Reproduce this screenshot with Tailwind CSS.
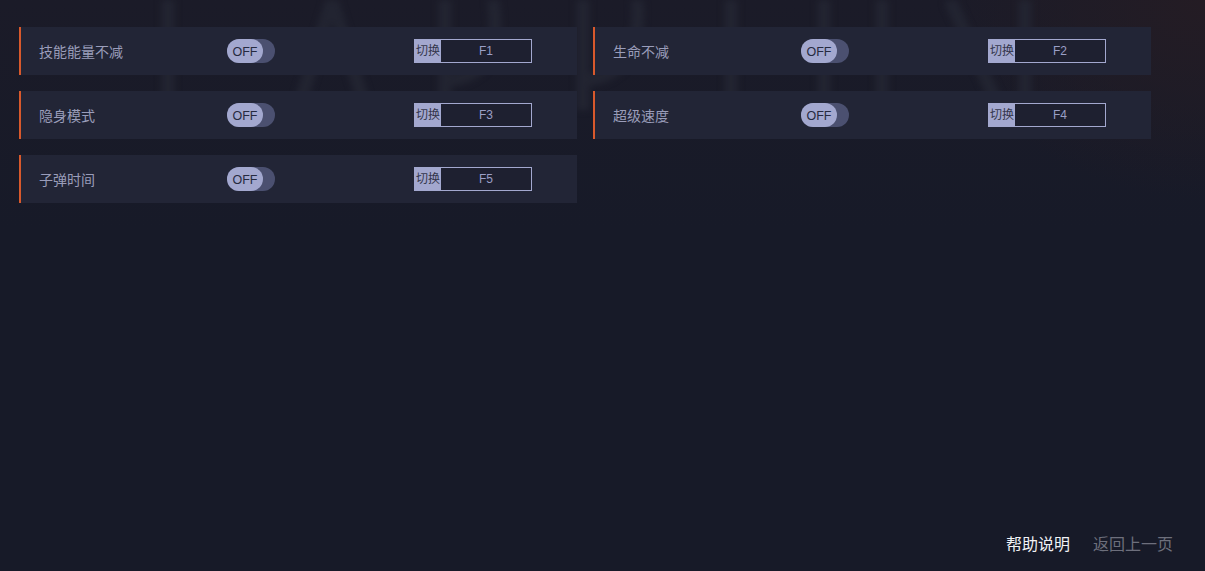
<!DOCTYPE html>
<html lang="zh-CN">
<head>
  <meta charset="UTF-8" />
  <title>修改器</title>
  <script src="https://cdn.jsdelivr.net/npm/@tailwindcss/browser@4"></script>
</head>
<body class="bg-[#171a28] font-['Liberation_Sans','Noto_Sans_CJK_SC',sans-serif]">
  <div class="relative w-[1205px] h-[571px] overflow-hidden">
    <!-- blurred backdrop picture -->
    <div class="absolute inset-x-0 top-0 h-[230px] bg-gradient-to-b from-[#1b1b28] to-[#171a28]"></div>
    <div class="absolute right-0 top-0 w-[260px] h-[200px] bg-[radial-gradient(ellipse_at_top_right,#241c24,transparent_70%)]"></div>
    <svg class="absolute left-0 top-0 blur-[3px]" width="1205" height="110" viewBox="0 0 1205 110" fill="none" stroke="#222431" stroke-width="13">
      <path d="M168 0V110" />
      <path d="M332 0L298 110M332 0L366 110" />
      <path d="M445 0V110M445 80C490 80 500 40 493 0" />
      <path d="M583 0V110M583 80C625 80 642 40 637 0" />
      <path d="M731 0V110" />
      <path d="M824 0V110" />
      <path d="M882 0V110" />
      <path d="M950 0L1000 110" />
      <path d="M1025 0V110" />
    </svg>

    <div class="relative grid grid-cols-[558px_558px] gap-4 pl-[19px] pt-[27px]">
      <div class="flex items-center h-12 bg-[#222536] border-l-2 border-[#d8592c] pl-[18px]">
        <span class="w-[188px] pt-0.5 text-sm text-[#9a9dba]">技能能量不减</span>
        <div class="w-12 h-6 rounded-full bg-[#4b5070]"><div class="flex items-center justify-center w-9 h-6 pt-0.5 rounded-full bg-[#a3a8cf] text-[12.5px] text-[#262a40]">OFF</div></div>
        <div class="flex ml-[139px] w-[118px] h-6 border border-[#a3a8cf] text-xs"><span class="flex items-center justify-center w-[26px] bg-[#a3a8cf] text-[#33364c]">切换</span><span class="flex-1 flex items-center justify-center text-[#9a9fc6] bg-[#1e2030]">F1</span></div>
      </div>
      <div class="flex items-center h-12 bg-[#222536] border-l-2 border-[#d8592c] pl-[18px]">
        <span class="w-[188px] pt-0.5 text-sm text-[#9a9dba]">生命不减</span>
        <div class="w-12 h-6 rounded-full bg-[#4b5070]"><div class="flex items-center justify-center w-9 h-6 pt-0.5 rounded-full bg-[#a3a8cf] text-[12.5px] text-[#262a40]">OFF</div></div>
        <div class="flex ml-[139px] w-[118px] h-6 border border-[#a3a8cf] text-xs"><span class="flex items-center justify-center w-[26px] bg-[#a3a8cf] text-[#33364c]">切换</span><span class="flex-1 flex items-center justify-center text-[#9a9fc6] bg-[#1e2030]">F2</span></div>
      </div>
      <div class="flex items-center h-12 bg-[#222536] border-l-2 border-[#d8592c] pl-[18px]">
        <span class="w-[188px] pt-0.5 text-sm text-[#9a9dba]">隐身模式</span>
        <div class="w-12 h-6 rounded-full bg-[#4b5070]"><div class="flex items-center justify-center w-9 h-6 pt-0.5 rounded-full bg-[#a3a8cf] text-[12.5px] text-[#262a40]">OFF</div></div>
        <div class="flex ml-[139px] w-[118px] h-6 border border-[#a3a8cf] text-xs"><span class="flex items-center justify-center w-[26px] bg-[#a3a8cf] text-[#33364c]">切换</span><span class="flex-1 flex items-center justify-center text-[#9a9fc6] bg-[#1e2030]">F3</span></div>
      </div>
      <div class="flex items-center h-12 bg-[#222536] border-l-2 border-[#d8592c] pl-[18px]">
        <span class="w-[188px] pt-0.5 text-sm text-[#9a9dba]">超级速度</span>
        <div class="w-12 h-6 rounded-full bg-[#4b5070]"><div class="flex items-center justify-center w-9 h-6 pt-0.5 rounded-full bg-[#a3a8cf] text-[12.5px] text-[#262a40]">OFF</div></div>
        <div class="flex ml-[139px] w-[118px] h-6 border border-[#a3a8cf] text-xs"><span class="flex items-center justify-center w-[26px] bg-[#a3a8cf] text-[#33364c]">切换</span><span class="flex-1 flex items-center justify-center text-[#9a9fc6] bg-[#1e2030]">F4</span></div>
      </div>
      <div class="flex items-center h-12 bg-[#222536] border-l-2 border-[#d8592c] pl-[18px]">
        <span class="w-[188px] pt-0.5 text-sm text-[#9a9dba]">子弹时间</span>
        <div class="w-12 h-6 rounded-full bg-[#4b5070]"><div class="flex items-center justify-center w-9 h-6 pt-0.5 rounded-full bg-[#a3a8cf] text-[12.5px] text-[#262a40]">OFF</div></div>
        <div class="flex ml-[139px] w-[118px] h-6 border border-[#a3a8cf] text-xs"><span class="flex items-center justify-center w-[26px] bg-[#a3a8cf] text-[#33364c]">切换</span><span class="flex-1 flex items-center justify-center text-[#9a9fc6] bg-[#1e2030]">F5</span></div>
      </div>
    </div>

    <div class="absolute right-8 bottom-[14px] flex gap-[23px] text-base leading-6">
      <span class="text-[#f1f2f6]">帮助说明</span>
      <span class="text-[#6d6f7c]">返回上一页</span>
    </div>
  </div>
</body>
</html>
